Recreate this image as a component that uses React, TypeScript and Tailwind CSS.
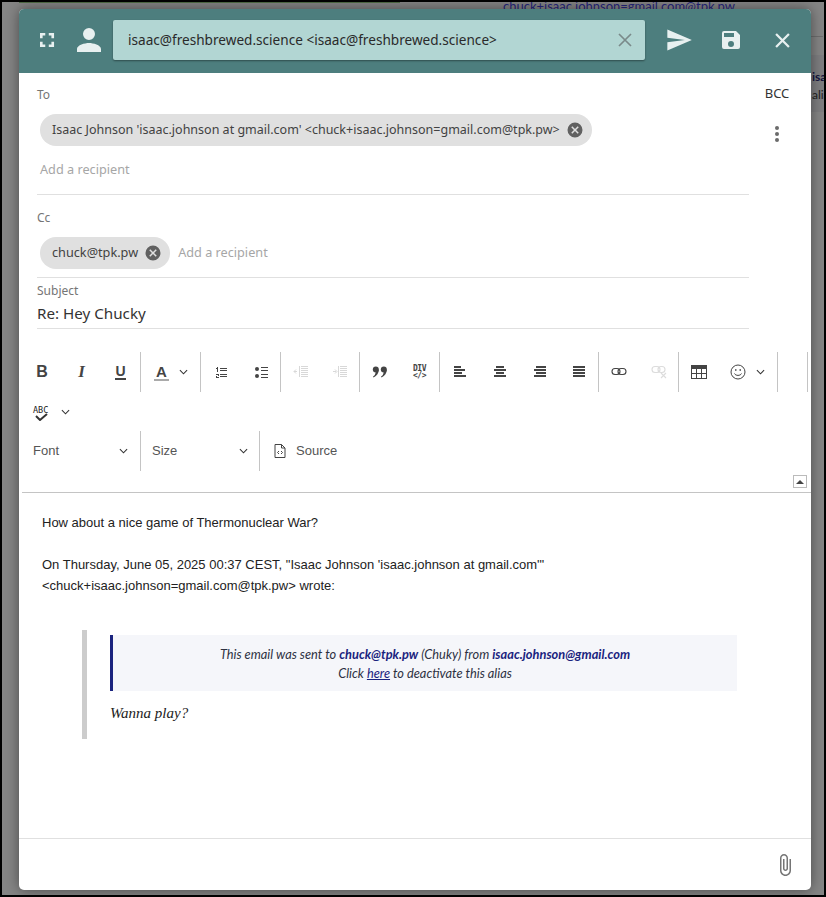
import React from "react";

const Chip = ({ text, size }: { text: string; size: string }) => (
  <span className={`inline-flex h-[32px] items-center rounded-full bg-[#e0e0e0] pl-[12px] pr-[8px] text-[#424242] ${size}`}>
    <span className="whitespace-nowrap">{text}</span>
    <svg viewBox="0 0 24 24" className="ml-[6px] h-[18px] w-[18px]" fill="#616161">
      <path d="M12 2a10 10 0 1 0 0 20 10 10 0 0 0 0-20Zm5 13.6L15.6 17 12 13.4 8.4 17 7 15.600 10.600 12 7 8.400 8.400 7l3.600 3.600L15.600 7 17 8.400 13.400 12l3.600 3.600Z" />
    </svg>
  </span>
);

const Sep = () => <span className="h-[40px] w-px shrink-0 bg-[#c4c4c4]" />;
const Btn = ({ children, w = 40 }: { children?: React.ReactNode; w?: number }) => (
  <span className="flex h-[40px] shrink-0 items-center justify-center" style={{ width: w }}>{children}</span>
);
const Chev = () => (
  <svg viewBox="0 0 10 6" className="h-[6px] w-[9px]" fill="none" stroke="#333" strokeWidth="1.2"><path d="M1 1l4 4 4-4" /></svg>
);
const I = ({ children, w = 16 }: { children: React.ReactNode; w?: number }) => (
  <svg viewBox="0 0 16 16" width={w} height={w} fill="#444">{children}</svg>
);

const bars = (rows: [number, number][], fill = "#444") =>
  rows.map(([x, w], i) => <rect key={i} x={x} y={2 + i * 3} width={w} height="2" fill={fill} />);

const thin = (x: number, w: number, ys: number[], fill = "#444") =>
  ys.map((y) => <rect key={y} x={x} y={y} width={w} height="1" fill={fill} />);

const Alias = () => (
  <div className="ml-[23px] h-[56px] w-[627px] border-l-[3px] border-[#1a237e] bg-[#f5f6fa] pt-[10px] text-center font-['Lato',sans-serif] text-[12.8px] leading-[19px] text-[#2d3142] italic">
    <div>
      This email was sent to <b className="text-[#1a237e]">chuck@tpk.pw</b> (Chuky) from{" "}
      <b className="text-[#1a237e]">isaac.johnson@gmail.com</b>
    </div>
    <div>
      Click <u className="text-[#1a237e]">here</u> to deactivate this alias
    </div>
  </div>
);

export default function App() {
  return (
    <div className="relative h-[897px] w-[826px] overflow-hidden border-2 border-black bg-[#858585] font-['Noto_Sans',sans-serif]">
      <div className="absolute left-[17px] top-0 h-[1px] w-[381px] bg-[#4f6b45]" />
      <div className="absolute left-[501px] top-[-3px] whitespace-nowrap font-['Lato',sans-serif] text-[13px] leading-[14px] text-[#26267e]">chuck+isaac.johnson=gmail.com@tpk.pw</div>
      <div className="absolute right-[1px] top-[34px] h-[1px] w-[14px] bg-[#6e6e6e]" />
      <div className="absolute right-0 top-[53px] h-[57px] w-[13px] overflow-hidden bg-[#7e7e80] pt-[14px] font-['Lato',sans-serif] text-[12px] leading-[16px] text-[#222]">
        <b className="pl-[1px] text-[#14143e]">isa</b>
        <div className="mt-[2px] pl-[1px]">alia</div>
      </div>
      <div className="relative ml-[17px] mt-[7px] flex h-[881px] w-[792px] flex-col overflow-hidden rounded-[5px] bg-white shadow-[0_0_14px_rgba(0,0,0,0.45)]">
        <header className="flex h-[64px] shrink-0 items-center bg-[#4d7e7e] pb-[2px]">
          <svg viewBox="0 0 24 24" className="ml-[17px] h-[22px] w-[22px]" fill="#e8f0f0">
            <path d="M7 14H4v6h6v-3H7v-3Zm-3-4h3V7h3V4H4v6Zm13 7h-3v3h6v-6h-3v3ZM14 4v3h3v3h3V4h-6Z" transform="translate(.5 .5) scale(.96)" />
          </svg>
          <svg viewBox="0 0 24 24" className="ml-[15px] h-[32px] w-[32px]" fill="#e8f0f0">
            <path d="M12 12a4.500 4.500 0 1 0 0-9 4.500 4.500 0 0 0 0 9Zm0 2.200c-3 0-9 1.500-9 4.500V21h18v-2.300c0-3-6-4.500-9-4.500Z" />
          </svg>
          <div className="ml-[8px] flex h-[40px] w-[532px] items-center rounded-[2px] bg-[#b2d6d3] pl-[15px] pr-[13px] text-[13.6px] text-[#2a2a2a] shadow-[0_1px_2px_rgba(0,0,0,0.4)]">
            <span className="flex-1 whitespace-nowrap">isaac@freshbrewed.science &lt;isaac@freshbrewed.science&gt;</span>
            <svg viewBox="0 0 14 14" className="h-[14px] w-[14px]" stroke="#7a8a8a" strokeWidth="1.7" fill="none"><path d="M1 1l12 12M13 1L1 13" /></svg>
          </div>
          <svg viewBox="0 0 24 24" className="ml-[20px] h-[28px] w-[28px]" fill="#e8f0f0"><path d="M2 21l21-9L2 3v7l15 2-15 2v7Z" /></svg>
          <svg viewBox="0 0 24 24" className="ml-[26px] h-[24px] w-[24px]" fill="#e8f0f0">
            <path d="M17 3H5a2 2 0 0 0-2 2v14a2 2 0 0 0 2 2h14a2 2 0 0 0 2-2V7l-4-4Zm-5 16a3 3 0 1 1 0-6 3 3 0 0 1 0 6Zm3-10H5V5h10v4Z" />
          </svg>
          <svg viewBox="0 0 14 14" className="ml-[32px] h-[15px] w-[15px]" stroke="#e8f0f0" strokeWidth="2.1" fill="none"><path d="M1 1l12 12M13 1L1 13" /></svg>
        </header>

        <div className="flex shrink-0">
          <div className="ml-[18px] w-[712px]">
            <div className="h-[122px] border-b border-[#e0e0e0] pt-[15px]">
              <div className="text-[12px] leading-[14px] text-[#757575]">To</div>
              <div className="ml-[3px] mt-[12px]"><Chip size="text-[12.5px]" text="Isaac Johnson 'isaac.johnson at gmail.com' <chuck+isaac.johnson=gmail.com@tpk.pw>" /></div>
              <div className="ml-[3px] mt-[14px] text-[12.7px] leading-[18px] text-[#a6a6a6]">Add a recipient</div>
            </div>
            <div className="h-[83px] border-b border-[#e0e0e0] pt-[16px]">
              <div className="text-[12px] leading-[14px] text-[#757575]">Cc</div>
              <div className="ml-[3px] mt-[12px] flex items-center">
                <Chip size="text-[12.7px]" text="chuck@tpk.pw" />
                <span className="ml-[8px] text-[12.7px] text-[#a6a6a6]">Add a recipient</span>
              </div>
            </div>
            <div className="h-[51px] border-b border-[#e0e0e0] pt-[6px]">
              <div className="text-[12px] leading-[14px] text-[#757575]">Subject</div>
              <div className="mt-[5px] text-[15.2px] leading-[20px] text-[#333]">Re: Hey Chucky</div>
            </div>
          </div>
          <div className="ml-[16px] flex w-[24px] flex-col items-center">
            <span className="mt-[11px] text-[13px] leading-[18px] text-[#333]">BCC</span>
            <svg viewBox="0 0 6 18" className="mt-[23px] h-[18px] w-[6px]" fill="#6b6b6b"><circle cx="3" cy="3" r="2" /><circle cx="3" cy="9" r="2" /><circle cx="3" cy="15" r="2" /></svg>
          </div>
        </div>

        <div className="relative ml-[3px] h-[164px] shrink-0 border-b border-[#c4c4c4] pt-[23px] font-['Liberation_Sans',sans-serif]">
          <div className="flex h-[40px] items-center">
            <Btn w={40}><span className="text-[16px] font-bold text-[#444]">B</span></Btn>
            <Btn w={39}><span className="font-['Liberation_Serif',serif] text-[17px] font-bold italic text-[#444]">I</span></Btn>
            <Btn w={39}><span className="border-b-2 border-[#444] text-[14px] leading-[14px] font-bold text-[#444]">U</span></Btn>
            <Sep />
            <Btn w={59}>
              <span className="ml-[1px] w-[15px] border-b-2 border-[#aaa] text-center text-[15px] leading-[15px] font-bold text-[#444]">A</span>
              <span className="ml-[10px]"><Chev /></span>
            </Btn>
            <Sep />
            <Btn w={40}><I>
              {thin(7, 7, [4, 6, 10, 12])}
              <rect x="4" y="3" width="1" height="5" /><rect x="3" y="4" width="1" height="1" />
              <path d="M3 10h3v2H4v1h2v1H3v-2h2v-1H3z" />
            </I></Btn>
            <Btn w={39}><I><circle cx="4" cy="5" r="2" /><circle cx="4" cy="12" r="2" />{thin(8, 7, [3, 6, 10, 13])}</I></Btn>
            <Sep />
            <Btn w={39}><I>{thin(8, 7, [2, 4, 6, 8, 10, 12], "#d8d8d8")}<rect x="6" y="2" width="1" height="11" fill="#d8d8d8" /><path d="M1 7.500h3M3 5.500l-2 2 2 2" stroke="#d8d8d8" fill="none" /></I></Btn>
            <Btn w={39}><I>{thin(8, 7, [2, 4, 6, 8, 10, 12], "#d8d8d8")}<rect x="6" y="2" width="1" height="11" fill="#d8d8d8" /><path d="M1 7.500h3M3 5.500l2 2-2 2" stroke="#d8d8d8" fill="none" /></I></Btn>
            <Sep />
            <Btn w={40}><svg viewBox="0 0 16 12" width="16" height="12" fill="#444"><circle cx="3.800" cy="3.500" r="3" /><path d="M6.800 3.500C6.800 7 5 10 1.500 11.500L1 10.500C2.800 9.500 3.500 8 3.500 6.500Z" /><circle cx="11.800" cy="3.500" r="3" /><path d="M14.800 3.500C14.800 7 13 10 9.500 11.500L9 10.500C10.800 9.500 11.500 8 11.500 6.500Z" /></svg></Btn>
            <Btn w={39}>
              <span className="flex flex-col items-center font-['DejaVu_Sans_Mono',monospace] text-[8px] leading-[7.5px] font-bold tracking-[-0.5px] text-[#444]">
                <span>DIV</span>
                <span>&lt;/&gt;</span>
              </span>
            </Btn>
            <Sep />
            <Btn w={40}><I>{bars([[2, 7], [2, 11], [2, 8], [2, 12]])}</I></Btn>
            <Btn w={40}><I>{bars([[4, 8], [2, 12], [4, 8], [2, 12]])}</I></Btn>
            <Btn w={40}><I>{bars([[4, 10], [2, 12], [4, 10], [2, 12]])}</I></Btn>
            <Btn w={38}><I>{bars([[2, 12], [2, 12], [2, 12], [2, 12]])}</I></Btn>
            <Sep />
            <Btn w={40}><svg viewBox="0 0 16 10" width="16" height="10" fill="none" stroke="#444" strokeWidth="1.100"><rect x="1" y="1.500" width="8" height="6" rx="3" /><rect x="7" y="1.500" width="8" height="6" rx="3" /></svg></Btn>
            <Btn w={39}><svg viewBox="0 0 16 14" width="16" height="14" fill="none" stroke="#dcdcdc" strokeWidth="1.100"><rect x="1" y="1.500" width="8" height="6" rx="3" /><rect x="7" y="1.500" width="7" height="6" rx="3" /><path d="M10 8l5 5M15 8l-5 5" /></svg></Btn>
            <Sep />
            <Btn w={39}><svg viewBox="0 0 16 14" width="16" height="14" fill="none"><rect x=".5" y=".5" width="15" height="13" stroke="#444" /><rect x="0" y="0" width="16" height="4" fill="#444" /><path d="M.5 8.500h15M5.500 4v10M10.500 4v10" stroke="#444" /></svg></Btn>
            <Btn w={59}>
              <svg viewBox="0 0 16 16" width="16" height="16" fill="none" stroke="#444" className="mr-[-2px]"><circle cx="8" cy="8" r="7" /><path d="M4.500 9.500c1 2.500 6 2.500 7 0" /><path d="M5 6h1.500M9.500 6H11" strokeWidth="1.500" /></svg>
              <span className="ml-[12px]"><Chev /></span>
            </Btn>
            <Sep />
            <Btn w={29} />
            <Sep />
          </div>
          <div className="flex h-[39px] items-center">
            <Btn w={40}>
              <span className="relative h-[16px] w-[16px]">
                <span className="absolute left-[-1px] top-[1px] font-['DejaVu_Sans_Mono',monospace] text-[8.5px] leading-[10px] text-[#222]">ABC</span>
                <svg viewBox="0 0 14 8" className="absolute left-[1px] top-[9px] h-[8px] w-[14px]" fill="none" stroke="#333" strokeWidth="2"><path d="M1 3l4 4 7-6" /></svg>
              </span>
            </Btn>
            <span className="ml-[-1px]"><Chev /></span>
          </div>
          <div className="flex h-[40px] items-center text-[13px] text-[#555]">
            <div className="flex h-full w-[118px] items-center pl-[11px] pr-[12px]"><span className="mb-[1px] flex-1 text-[13px] leading-[13px]">Font</span><Chev /></div>
            <Sep />
            <div className="flex h-full w-[118px] items-center pl-[11px] pr-[11px]"><span className="mb-[1px] flex-1 text-[13px] leading-[13px]">Size</span><Chev /></div>
            <Sep />
            <svg viewBox="0 0 12 14" className="ml-[14px] h-[14px] w-[12px]" fill="none" stroke="#444"><path d="M1 .5h6.500L11 4v9.500H1z M7.500 .5V4H11" /><path d="M5 7L3.500 8.500 5 10M7 7l1.500 1.500L7 10" /></svg>
            <span className="ml-[10px]">Source</span>
          </div>
          <span className="absolute bottom-[4px] right-[4px] flex h-[13px] w-[14px] items-center justify-center border border-[#bbb]">
            <span className="h-0 w-0 border-x-[4px] border-b-[4px] border-x-transparent border-b-[#444]" />
          </span>
        </div>

        <main className="flex-1 pl-[23px] pt-[19px] font-['Liberation_Sans',sans-serif] text-[13px] leading-[21px] text-[#222]">
          <p>How about a nice game of Thermonuclear War?</p>
          <p className="mt-[21px] w-[540px]">
            On Thursday, June 05, 2025 00:37 CEST, "Isaac Johnson 'isaac.johnson at gmail.com'" &lt;chuck+isaac.johnson=gmail.com@tpk.pw&gt; wrote:
          </p>
          <blockquote className="ml-[40px] mt-[34px] h-[109px] border-l-[5px] border-[#ccc] pt-[5px]">
            <Alias />
            <p className="ml-[23px] mt-[12px] font-['Liberation_Serif',serif] text-[15px] leading-[20px] text-[#222] italic">Wanna play?</p>
          </blockquote>
        </main>

        <footer className="flex h-[52px] shrink-0 items-center justify-end border-t border-[#e0e0e0] pr-[14px]">
          <svg viewBox="0 0 24 24" width="24" height="24" fill="#757575">
            <path d="M16.500 6v11.500c0 2.210-1.790 4-4 4s-4-1.790-4-4V5c0-1.380 1.120-2.500 2.500-2.500s2.500 1.120 2.500 2.500v10.500c0 .55-.45 1-1 1s-1-.45-1-1V6H10v9.500c0 1.380 1.120 2.500 2.500 2.500s2.500-1.120 2.500-2.500V5c0-2.210-1.790-4-4-4S7 2.790 7 5v12.500c0 3.040 2.460 5.500 5.500 5.500s5.500-2.460 5.500-5.500V6h-1.500z" />
          </svg>
        </footer>
      </div>
    </div>
  );
}
